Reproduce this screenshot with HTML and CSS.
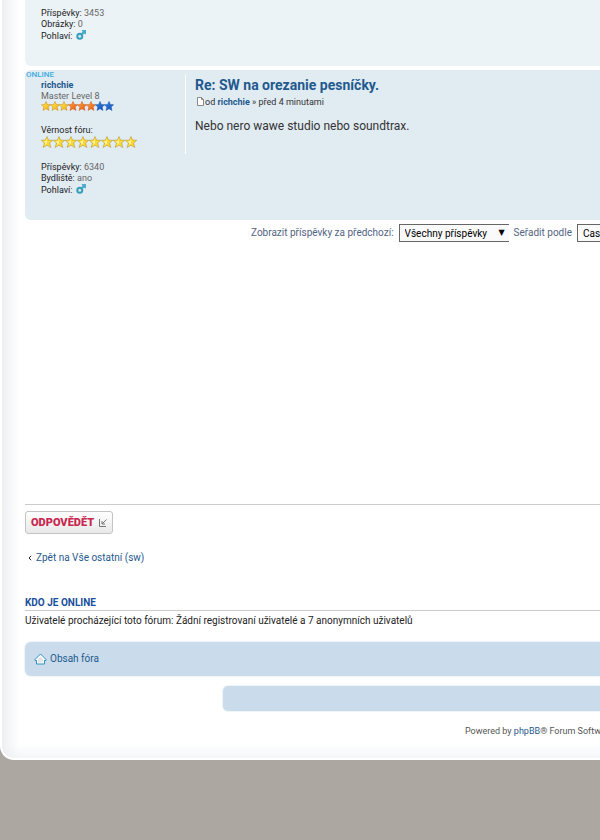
FILE: index.html
```html
<!DOCTYPE html>
<html lang="cs">
<head>
  <meta charset="UTF-8">
  <meta name="viewport" content="width=device-width, initial-scale=1.0">
  <title>SW na orezanie pesníčky</title>
  <link rel="stylesheet" href="styles.css">
</head>
<body>
  <svg class="sprites" aria-hidden="true">
    <defs>
      <linearGradient id="gold" x1="0" y1="0" x2="1" y2="1">
        <stop offset="0" stop-color="#ffee3c"/><stop offset="1" stop-color="#f7a81c"/>
      </linearGradient>
      <linearGradient id="fire" x1="0" y1="0" x2="1" y2="1">
        <stop offset="0" stop-color="#ffae34"/><stop offset="1" stop-color="#e84e18"/>
      </linearGradient>
      <linearGradient id="sea" x1="0" y1="0" x2="1" y2="1">
        <stop offset="0" stop-color="#3585e6"/><stop offset="1" stop-color="#0d4db4"/>
      </linearGradient>
      <symbol id="star" viewBox="0 0 20 20">
        <path d="M10 .8l2.7 6.1 6.6.6-5 4.5 1.6 6.9-5.9-3.600-5.900 3.600L5.700 12l-5-4.500 6.600-.6z"/>
      </symbol>
      <symbol id="bigstar" viewBox="0 0 24 24">
        <path d="M12 1l3 7 8.500.5-6.400 5.700L19.800 23 12 18.500 4.200 23l2.700-8.800L.5 8.500 9 8z" fill="#ffd92e" stroke="#b59a45" stroke-width="1.200"/>
        <path d="M12 5l-2 5-5 .5 4 3.500L8 18l4-3z" fill="#fff3a0"/>
      </symbol>
      <symbol id="male" viewBox="0 0 20 20">
        <circle cx="7.500" cy="12.500" r="5" fill="#c8eef6" stroke="#3a9dba" stroke-width="4"/>
        <path d="M11 9l4-4" stroke="#3a9dba" stroke-width="3"/>
        <path d="M11 0h9v9l-3-1.500-3 1.500-3-3 2-3z" fill="#4fabc6"/>
      </symbol>
    </defs>
  </svg>

  <div class="page">
    <div class="post post-light">
      <dl class="profile">
        <dd><strong>Příspěvky:</strong> 3453</dd>
        <dd><strong>Obrázky:</strong> 0</dd>
        <dd class="gender"><strong>Pohlaví:</strong> <svg class="male" role="img" aria-label="Muž"><use href="#male"/></svg></dd>
      </dl>
    </div>

    <div class="post post-dark">
      <span class="online">ONLINE</span>
      <dl class="profile">
        <dt><a href="#">richchie</a></dt>
        <dd>Master Level 8</dd>
        <dd class="rank">
          <svg class="gold"><use href="#star"/></svg>
          <svg class="gold"><use href="#star"/></svg>
          <svg class="gold"><use href="#star"/></svg>
          <svg class="fire"><use href="#star"/></svg>
          <svg class="fire"><use href="#star"/></svg>
          <svg class="fire"><use href="#star"/></svg>
          <svg class="sea"><use href="#star"/></svg>
          <svg class="sea"><use href="#star"/></svg>
        </dd>
        <dd class="group"><strong>Věrnost fóru:</strong></dd>
        <dd class="loyalty">
          <svg><use href="#bigstar"/></svg>
          <svg><use href="#bigstar"/></svg>
          <svg><use href="#bigstar"/></svg>
          <svg><use href="#bigstar"/></svg>
          <svg><use href="#bigstar"/></svg>
          <svg><use href="#bigstar"/></svg>
          <svg><use href="#bigstar"/></svg>
          <svg><use href="#bigstar"/></svg>
        </dd>
        <dd class="group"><strong>Příspěvky:</strong> 6340</dd>
        <dd><strong>Bydliště:</strong> ano</dd>
        <dd class="gender"><strong>Pohlaví:</strong> <svg class="male" role="img" aria-label="Muž"><use href="#male"/></svg></dd>
      </dl>
      <div class="postbody">
        <h3><a href="#">Re: SW na orezanie pesníčky.</a></h3>
        <p class="author">
          <svg class="sheet" viewBox="0 0 9 9"><path d="M1.500.5h4l2 2v6h-6z" fill="#fff" stroke="#888"/><path d="M5.500.5v2h2" fill="none" stroke="#888"/></svg>od <a href="#">richchie</a> » před 4 minutami
        </p>
        <div class="content">Nebo nero wawe studio nebo soundtrax.</div>
      </div>
    </div>

    <form class="display-options">
      <label for="st">Zobrazit příspěvky za předchozí:</label>
      <span class="select">
        <select id="st">
          <option>Všechny příspěvky</option>
          <option>1 den</option>
          <option>7 dní</option>
        </select>
      </span>
      <label for="sk">Seřadit podle</label>
      <span class="select">
        <select id="sk">
          <option>Čas odeslání</option>
          <option>Autor</option>
          <option>Předmět</option>
        </select>
      </span>
    </form>

    <div class="topic-actions">
      <button type="button" class="reply">ODPOVĚDĚT
        <svg viewBox="0 0 8 8"><path d="M.5 0v7.500H7M7.500.5L3 5M3 2v3h3" fill="none" stroke="#777"/></svg>
      </button>
    </div>

    <p class="back"><svg viewBox="0 0 4 6"><path d="M3.200.8L1 3l2.200 2.200" fill="none" stroke="#222"/></svg><a href="#">Zpět na Vše ostatní (sw)</a></p>

    <h4><a href="#">Kdo je online</a></h4>
    <p class="visitors">Uživatelé procházející toto fórum: Žádní registrovaní uživatelé a 7 anonymních uživatelů</p>

    <div class="navbar">
      <svg viewBox="0 0 13 12"><path d="M6.500 1L12 6.500v1h-1.500v3.500h-8V7.500H1v-1z" fill="#fff" stroke="#2f8fc4" stroke-linejoin="round"/><path d="M6.500 3.500L9 6v3.500H4V6z" fill="#e4e4e4"/></svg>
      <a href="#">Obsah fóra</a>
    </div>
    <div class="subbar"></div>
    <div class="copyright">Powered by <a href="#">phpBB</a>® Forum Software © phpBB Group</div>
  </div>
</body>
</html>
```
FILE: styles.css
```css
body {
  margin: 0;
  background-color: #aca7a0;
  font-family: Roboto, sans-serif;
  font-size: 10px;
  line-height: 12px;
  color: #333;
  overflow: hidden;
}

a {
  color: #1f5a8e;
  text-decoration: none;
}

h3, h4, p, dl, dd {
  margin: 0;
}

.sprites {
  position: absolute;
  width: 0;
  height: 0;
}

.page {
  padding: 0 0 21px 23px;
  border-left: 2px solid #fff;
  border-bottom: 2px solid #fff;
  border-bottom-left-radius: 14px;
  background:
    linear-gradient(to right, #edeff1, rgba(255, 255, 255, 0) 17px),
    linear-gradient(to top, #f4f6f8, #fff 15px);
  background-color: #fff;
  white-space: nowrap;
  overflow: hidden;
}

/* posts */
.post {
  position: relative;
  display: flex;
  padding-left: 16px;
  margin-bottom: 4px;
}

.post-light {
  background-color: #ecf3f7;
  border-radius: 0 0 0 6px;
  padding-top: 8px;
  padding-bottom: 24px;
}

.post-dark {
  background-color: #e1ebf2;
  border-radius: 6px 0 0 6px;
  padding-top: 10px;
  padding-bottom: 24px;
}

.online {
  position: absolute;
  top: 0;
  left: 1px;
  color: #3cabe0;
  font-size: 8px;
  font-weight: 500;
  line-height: 10px;
}

.profile {
  width: 144px;
  font-size: 9px;
  line-height: 11px;
  color: #666;
}

.profile strong {
  font-weight: normal;
  color: #222;
}

.profile dt a {
  font-weight: bold;
}

.profile .gender {
  display: flex;
  gap: 3px;
  line-height: 12px;
}

.male {
  width: 10px;
  height: 10px;
}

.rank, .loyalty {
  display: flex;
}

.rank {
  margin-top: -1px;
}

.rank svg {
  width: 10px;
  height: 10px;
  margin-right: -1px;
}

.gold {
  fill: url(#gold);
  stroke: #c98a1c;
}

.fire {
  fill: url(#fire);
  stroke: #c9591c;
}

.sea {
  fill: url(#sea);
  stroke: #1d55a8;
}

.loyalty {
  height: 12px;
}

.loyalty svg {
  width: 12px;
  height: 12px;
}

.profile .group {
  margin-top: 14px;
}

.postbody {
  flex: 1;
  align-self: flex-start;
  height: 79px;
  margin-top: -5px;
  padding-left: 9px;
  border-left: 1px solid #fff;
}

.postbody h3 {
  padding-top: 1px;
  font-size: 14px;
  line-height: 18px;
}

.author {
  padding-top: 2px;
  font-size: 9px;
  line-height: 12px;
}

.author a {
  font-weight: bold;
}

.sheet {
  width: 9px;
  height: 9px;
  margin-left: 1px;
  vertical-align: -1px;
}

.content {
  padding-top: 10px;
  font-size: 12px;
  line-height: 17px;
}

/* sorting form */
.display-options {
  display: flex;
  align-items: center;
  margin-left: 226px;
  color: #536482;
}

.select {
  position: relative;
  margin: 0 5px;
}

.select::after {
  content: "▼";
  position: absolute;
  top: 3px;
  right: 4px;
  color: #000;
  font-family: "DejaVu Sans", sans-serif;
  font-size: 8px;
}

.select select {
  appearance: none;
  display: block;
  width: 110px;
  height: 18px;
  padding: 0 5px;
  border: 1px solid #666;
  border-right: 0;
  border-radius: 0;
  background-color: #fafafa;
  color: #000;
  font: 10px Roboto, sans-serif;
}

/* topic footer */
.topic-actions {
  margin-top: 262px;
  padding-top: 6px;
  border-top: 1px solid #ccc;
}

.reply {
  display: flex;
  align-items: center;
  gap: 5px;
  height: 23px;
  padding: 0 5px;
  border: 1px solid #c4c4c4;
  border-radius: 3px;
  background: linear-gradient(#fff, #e8e8e8);
  color: #c8284f;
  font: 900 11px Roboto, sans-serif;
}

.reply svg {
  width: 8px;
  height: 8px;
}

.back {
  display: flex;
  align-items: center;
  gap: 4px;
  margin-top: 18px;
  padding-left: 3px;
}

.back svg {
  width: 4px;
  height: 6px;
}

h4 {
  margin-top: 33px;
  padding-bottom: 1px;
  border-bottom: 1px solid #ccc;
  font-size: 10px;
  text-transform: uppercase;
}

h4 a {
  color: #1a4f9c;
}

.visitors {
  margin-top: 4px;
  color: #222;
}

.navbar {
  display: flex;
  align-items: center;
  gap: 3px;
  height: 34px;
  margin-top: 15px;
  padding-left: 9px;
  background-color: #cadceb;
  border-radius: 6px 0 0 6px;
  box-shadow: 0 0 0 1px #eef4f8;
}

.navbar svg {
  width: 13px;
  height: 12px;
}

.subbar {
  height: 25px;
  margin: 10px 0 0 198px;
  background-color: #cadceb;
  border-radius: 5px 0 0 5px;
  box-shadow: 0 0 0 1px #eef4f8;
}

.copyright {
  margin: 14px 0 0 440px;
  color: #555;
  font-size: 9px;
}
```
